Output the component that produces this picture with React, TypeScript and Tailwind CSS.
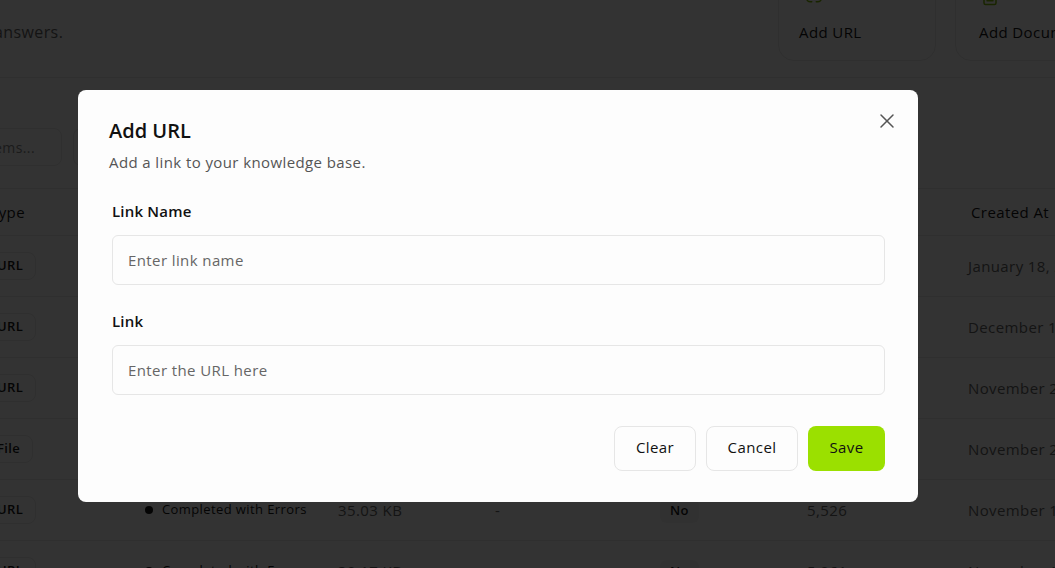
import * as React from 'react';
import { X, Link2, FileText } from 'lucide-react';

type Row = {
  type: string;
  status: string;
  size: string;
  sync: string;
  auto: string;
  chars: string;
  created: string;
};

const rows: Row[] = [
  { type: 'URL', status: 'Completed', size: '12.40 KB', sync: '-', auto: 'No', chars: '2,114', created: 'January 18, 2025' },
  { type: 'URL', status: 'Completed', size: '22.81 KB', sync: '-', auto: 'No', chars: '3,902', created: 'December 12, 2024' },
  { type: 'URL', status: 'Completed', size: '18.09 KB', sync: '-', auto: 'No', chars: '3,440', created: 'November 28, 2024' },
  { type: 'File', status: 'Completed', size: '64.52 KB', sync: '-', auto: 'No', chars: '9,870', created: 'November 22, 2024' },
  { type: 'URL', status: 'Completed with Errors', size: '35.03 KB', sync: '-', auto: 'No', chars: '5,526', created: 'November 14, 2024' },
  { type: 'URL', status: 'Completed with Errors', size: '30.17 KB', sync: '-', auto: 'No', chars: '5,061', created: 'November 11, 2024' },
];

const cols = 'grid grid-cols-[84px_161px_193px_157px_165px_147px_161px_200px]';

const Background: React.FC = () => (
  <div className="h-[568px] overflow-hidden bg-white text-[#171717]">
    <div className="flex h-[78px] items-start justify-between border-b border-[#e8e8e8]">
      <p className="ml-[-371px] mt-[20px] whitespace-nowrap text-[16px] leading-[24px] text-[#666]">Connect your sources to improve your agent's answers.</p>
      <div className="mr-[-80px] mt-[-21px] flex gap-[19px]">
        <div className="flex h-[82px] w-[158px] flex-col justify-end rounded-2xl border border-[#e8e8e8] px-5 pb-[17px]">
          <Link2 size={18} className="mb-[14px] ml-[6px] text-[#7cb800]" />
          <span className="text-[15px] font-medium">Add URL</span>
        </div>
        <div className="flex h-[82px] w-[180px] flex-col justify-end rounded-2xl border border-[#e8e8e8] pb-[17px] pl-[23px] pr-5">
          <FileText size={18} className="mb-[15px] ml-[2px] text-[#7cb800]" />
          <span className="whitespace-nowrap text-[15px] font-medium">Add Document</span>
        </div>
      </div>
    </div>

    <div className="flex h-[110px] items-start gap-[11px] pt-[50px]">
      <div className="ml-[-79px] flex h-[38px] w-[141px] items-center whitespace-nowrap rounded-lg border border-[#e8e8e8] px-3 text-[14px] text-[#888]">
        Search items...
      </div>
      <div className="h-[38px] w-[110px] rounded-lg border border-[#e8e8e8]" />
    </div>

    <div className="ml-[-100px]">
      <div className={`${cols} h-[48px] items-center border-y border-[#e8e8e8] text-[15px] font-medium`}>
        <span />
        <span className="pl-[6px]">Type</span>
        <span className="pl-[2px]">Status</span>
        <span>Size</span>
        <span>Sync</span>
        <span>Auto</span>
        <span>Characters</span>
        <span className="pl-[3px]">Created At</span>
      </div>
      {rows.map((r, i) => (
        <div key={i} className={`${cols} h-[61px] items-center border-b border-[#e8e8e8]`}>
          <span />
          <span>
            <span className="inline-block rounded-lg border border-[#e8e8e8] px-3 py-[3px] text-[13px] font-semibold">{r.type}</span>
          </span>
          <span className="flex items-center gap-[9px] whitespace-nowrap text-[13px] font-medium">
            <span className="h-[8px] w-[8px] rounded-full bg-[#171717]" />
            {r.status}
          </span>
          <span className="text-[15px] text-[#666]">{r.size}</span>
          <span className="text-[15px] text-[#666]">{r.sync}</span>
          <span>
            <span className="inline-block rounded-md bg-[#f6f6f6] px-[10px] py-[2px] text-[13px] font-semibold">{r.auto}</span>
          </span>
          <span className="text-[15px] text-[#666]">{r.chars}</span>
          <span className="whitespace-nowrap text-[15px] text-[#666]">{r.created}</span>
        </div>
      ))}
    </div>
  </div>
);

const Field: React.FC<{ label: string; placeholder: string }> = ({ label, placeholder }) => (
  <div className="flex flex-col gap-[13px]">
    <label className="text-[15px] font-semibold leading-[22px] tracking-[0.2px] text-[#111]">{label}</label>
    <input
      placeholder={placeholder}
      className="h-[50px] w-full rounded-md border border-[#e6e6e6] bg-[#fdfdfd] px-[15px] text-[15px] text-[#111] outline-none placeholder:text-[#666]"
    />
  </div>
);

export default function App() {
  return (
    <div className="relative h-[568px] w-full overflow-hidden font-['Open_Sans',sans-serif] tracking-[0.4px]">
      <Background />
      <div className="fixed inset-0 bg-black/80" />
      <div className="fixed left-[78px] top-[90px] w-[840px] rounded-lg bg-[#fdfdfd] pb-[31px] pl-[31px] pr-[33px] pt-[27px]">
        <button className="absolute right-[19px] top-[19px] text-[#555]">
          <X size={24} strokeWidth={1.5} />
        </button>
        <h2 className="text-[20px] font-semibold leading-[28px] tracking-normal text-[#111]">Add URL</h2>
        <p className="mt-[6px] text-[15px] leading-[22px] text-[#555]">Add a link to your knowledge base.</p>
        <div className="mt-[27px] flex flex-col gap-[25px] pl-[3px]">
          <Field label="Link Name" placeholder="Enter link name" />
          <Field label="Link" placeholder="Enter the URL here" />
        </div>
        <div className="mt-[31px] flex justify-end gap-[10px]">
          <button className="h-[45px] w-[82px] rounded-lg border border-[#e6e6e6] bg-[#fdfdfd] pb-[2px] text-[15px] font-medium text-[#111]">Clear</button>
          <button className="h-[45px] w-[92px] rounded-lg border border-[#e6e6e6] bg-[#fdfdfd] pb-[2px] text-[15px] font-medium text-[#111]">Cancel</button>
          <button className="h-[45px] w-[77px] rounded-lg bg-[#9be000] pb-[2px] text-[15px] font-medium text-[#111]">Save</button>
        </div>
      </div>
    </div>
  );
}
